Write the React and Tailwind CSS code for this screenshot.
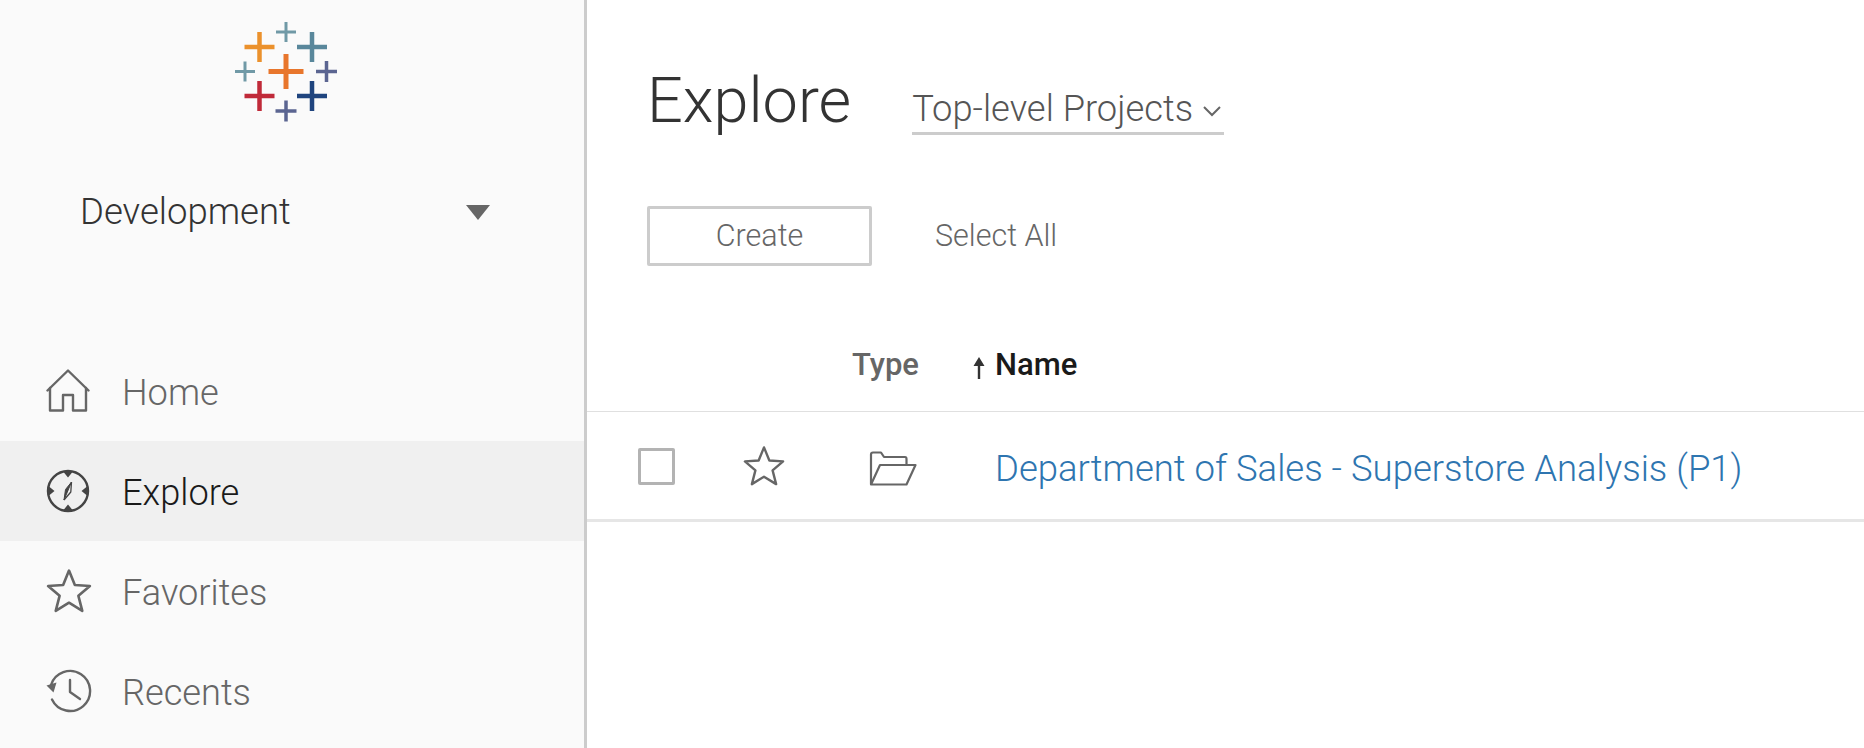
import React from "react";

function Plus({ cx, cy, arm, w, color }) {
  return (
    <g fill={color}>
      <rect x={cx - arm} y={cy - w / 2} width={arm * 2} height={w} />
      <rect x={cx - w / 2} y={cy - arm} width={w} height={arm * 2} />
    </g>
  );
}

function Logo() {
  return (
    <svg width="104" height="102" viewBox="234 21 104 102" className="block">
      <Plus cx={286} cy={32} arm={10} w={3} color="#7099a6" />
      <Plus cx={259.5} cy={47} arm={15} w={4.5} color="#eb912c" />
      <Plus cx={312} cy={47} arm={15} w={4.5} color="#59879b" />
      <Plus cx={245} cy={71.5} arm={10} w={3} color="#7099a6" />
      <Plus cx={286} cy={71.5} arm={17.5} w={5} color="#e8762c" />
      <Plus cx={326.5} cy={71.5} arm={10.5} w={3.5} color="#5b6591" />
      <Plus cx={259.5} cy={96} arm={15} w={4.5} color="#c02a39" />
      <Plus cx={312} cy={96} arm={15} w={4.5} color="#1f447e" />
      <Plus cx={286} cy={111} arm={10.5} w={3.5} color="#5b6591" />
    </svg>
  );
}

function HomeIcon() {
  return (
    <svg width="44" height="44" viewBox="0 0 44 44" fill="none" stroke="#666" strokeWidth="2.4" strokeLinejoin="round" strokeLinecap="round">
      <path d="M1.5 21.5 L22 1.5 L42.5 21.5" />
      <path d="M4 19 V41.5 H17 V26 H27 V41.5 H40 V19" />
    </svg>
  );
}

function CompassIcon() {
  return (
    <svg width="44" height="44" viewBox="0 0 44 44">
      <circle cx="22" cy="22" r="20" fill="none" stroke="#444" strokeWidth="2.4" />
      <path d="M17.5 3 H26.5 L22 8.5 Z M17.5 41 H26.5 L22 35.5 Z M3 17.5 V26.5 L8.5 22 Z M41 17.5 V26.5 L35.5 22 Z" fill="#444" />
      <path d="M25.5 13 L19.5 20.5 L18 31 Z" fill="#444" stroke="#444" strokeWidth="1" strokeLinejoin="round" />
      <path d="M25.5 13 L24.8 23 L18 31" fill="none" stroke="#444" strokeWidth="1.3" strokeLinejoin="round" />
    </svg>
  );
}

function StarIcon({ size = 46, color = "#666" }) {
  return (
    <svg width={size} height={size} viewBox="0 0 44 44" fill="none" stroke={color} strokeWidth="2.5" strokeLinejoin="round">
      <path d="M22 2.5 L27.6 16.2 L42 17.2 L31 26.6 L34.7 41 L22 33.2 L9.3 41 L13 26.6 L2 17.2 L16.4 16.2 Z" />
    </svg>
  );
}

function HistoryIcon() {
  return (
    <svg width="46" height="44" viewBox="0 0 46 44" fill="none" stroke="#666" strokeWidth="2.4" strokeLinecap="round" strokeLinejoin="round">
      <path d="M5 16 A20 20 0 1 1 6 30.5" />
      <path d="M0.5 16.5 L10.5 13.5 L7.5 23.5 Z" fill="#666" stroke="none" />
      <path d="M24 11 V23 L34 30" />
    </svg>
  );
}

function FolderIcon() {
  return (
    <svg width="48" height="36" viewBox="0 0 48 36" fill="none" stroke="#666" strokeWidth="2.2" strokeLinejoin="round">
      <path d="M2 33 V3.5 Q2 1.5 4 1.5 H12 L15 6 H36 Q37.5 6 37.5 8 V14" />
      <path d="M2 33.5 L11 14 H46.5 L37.5 33.5 Z" />
    </svg>
  );
}

function NavItem({ icon, label, active }) {
  return (
    <div className={`flex h-[100px] items-center pl-[46px] ${active ? "bg-[#f0f0f0]" : ""}`}>
      <div className="flex w-[76px] shrink-0 items-center">{icon}</div>
      <span className={`mt-[4px] text-[36.2px] font-light leading-none ${active ? "text-[#1a1a1a]" : "text-[#666666]"}`}>{label}</span>
    </div>
  );
}

export default function App() {
  return (
    <div className="flex h-[748px] w-full overflow-hidden bg-white font-['Roboto',sans-serif]">
      <aside className="flex w-[587px] shrink-0 flex-col border-r-[3px] border-[#cccccc] bg-[#fafafa]">
        <div className="flex justify-center pt-[21px] pr-[12px]">
          <Logo />
        </div>
        <div className="mt-[67px] flex h-[44px] items-center justify-between pl-[80px] pr-[94px]">
          <span className="text-[36.5px] font-light leading-none text-[#333333]">Development</span>
          <span className="h-0 w-0 border-x-[12px] border-t-[15px] border-x-transparent border-t-[#666666]" />
        </div>
        <nav className="mt-[107px] flex flex-col">
          <NavItem icon={<HomeIcon />} label="Home" />
          <NavItem icon={<CompassIcon />} label="Explore" active />
          <NavItem icon={<StarIcon />} label="Favorites" />
          <NavItem icon={<HistoryIcon />} label="Recents" />
        </nav>
      </aside>

      <main className="flex min-w-0 flex-1 flex-col">
        <div className="flex items-end pl-[60px] pt-[65px]">
          <h1 className="text-[63px] font-light leading-[72px] text-[#333333]">Explore</h1>
          <div className="ml-[61px] mb-[2px] flex h-[50px] items-center border-b-[3px] border-[#cccccc] pt-[2px] pr-[2px]">
            <span className="text-[36.3px] font-light leading-none text-[#555555]">Top-level Projects</span>
            <svg width="20" height="12" viewBox="0 0 20 12" fill="none" stroke="#666" strokeWidth="2" className="ml-[9px] mt-[3px]">
              <path d="M2 2 L10 10 L18 2" />
            </svg>
          </div>
        </div>

        <div className="mt-[69px] flex items-center pl-[60px]">
          <button className="flex h-[60px] w-[225px] items-center justify-center rounded-[2px] border-[3px] border-[#cccccc] bg-white text-[30.5px] font-light text-[#666666]">
            Create
          </button>
          <span className="ml-[63px] text-[30.5px] font-light leading-none text-[#666666]">Select All</span>
        </div>

        <div className="mt-[52px] flex h-[93px] items-center">
          <span className="ml-[265px] text-[31px] font-medium leading-none text-[#666666]">Type</span>
          <svg width="14" height="24" viewBox="0 0 14 24" className="ml-[53px] mt-[6px]">
            <path d="M7 1 L12.5 10 H8.2 V23 H5.8 V10 H1.5 Z" fill="#333" />
          </svg>
          <span className="ml-[9px] text-[31px] font-medium leading-none text-[#1a1a1a]">Name</span>
        </div>

        <div className="flex h-[111px] items-center border-t border-b-[3px] border-t-[#e0e0e0] border-b-[#e6e6e6]">
          <span className="ml-[51px] mt-[2px] h-[37px] w-[37px] rounded-[2px] border-[3px] border-[#b3b3b3] bg-white" />
          <span className="ml-[68px] flex"><StarIcon size={42} /></span>
          <span className="ml-[84px] mt-[6px] flex"><FolderIcon /></span>
          <a className="ml-[78px] mt-[8px] text-[36.5px] font-light leading-none text-[#2e75b0]">Department of Sales - Superstore Analysis (P1)</a>
        </div>
      </main>
    </div>
  );
}
